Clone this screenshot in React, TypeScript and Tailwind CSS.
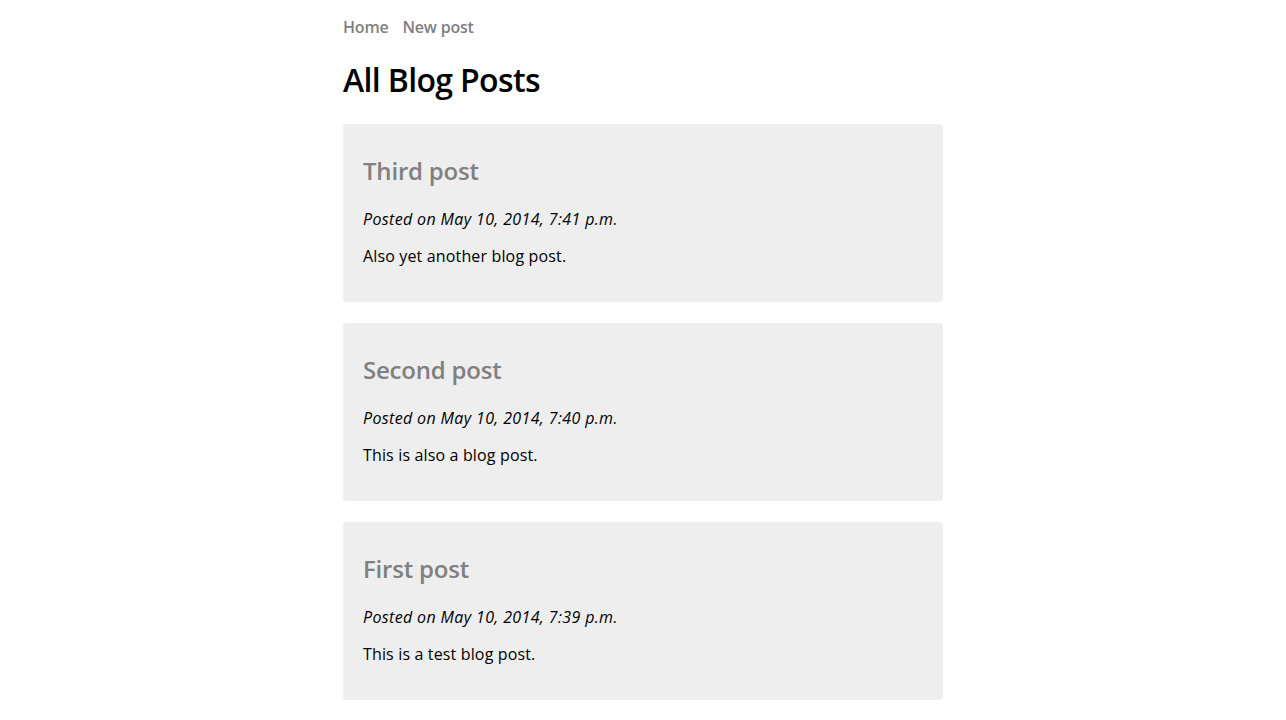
import React from "react";

const posts = [
  { title: "Third post", date: "May 10, 2014, 7:41 p.m.", body: "Also yet another blog post." },
  { title: "Second post", date: "May 10, 2014, 7:40 p.m.", body: "This is also a blog post." },
  { title: "First post", date: "May 10, 2014, 7:39 p.m.", body: "This is a test blog post." },
];

export default function App() {
  return (
    <div className="min-h-screen bg-white text-black" style={{ fontFamily: '"Open Sans", sans-serif' }}>
      <div className="mx-auto w-[600px] pt-4">
        <nav className="flex gap-[14px] text-[16px] leading-[22px] font-semibold tracking-[-0.2px] text-[#808080]">
          <a href="#">Home</a>
          <a href="#">New post</a>
        </nav>
        <h1 className="mt-[23px] text-[32px] leading-[38px] font-semibold tracking-[-0.65px]">All Blog Posts</h1>
        <div className="mt-[25px] flex flex-col gap-[21px]">
          {posts.map((p) => (
            <div key={p.title} className="rounded bg-[#eeeeee] px-5 pt-[32px] pb-[35px]">
              <h2 className="text-[24px] leading-[29px] font-semibold tracking-[-0.2px] text-[#808080]">{p.title}</h2>
              <p className="mt-[23px] text-[16px] leading-[22px] italic tracking-[0.36px]">Posted on {p.date}</p>
              <p className="mt-[15px] text-[16px] leading-[22px] tracking-[0.15px]">{p.body}</p>
            </div>
          ))}
        </div>
      </div>
    </div>
  );
}
